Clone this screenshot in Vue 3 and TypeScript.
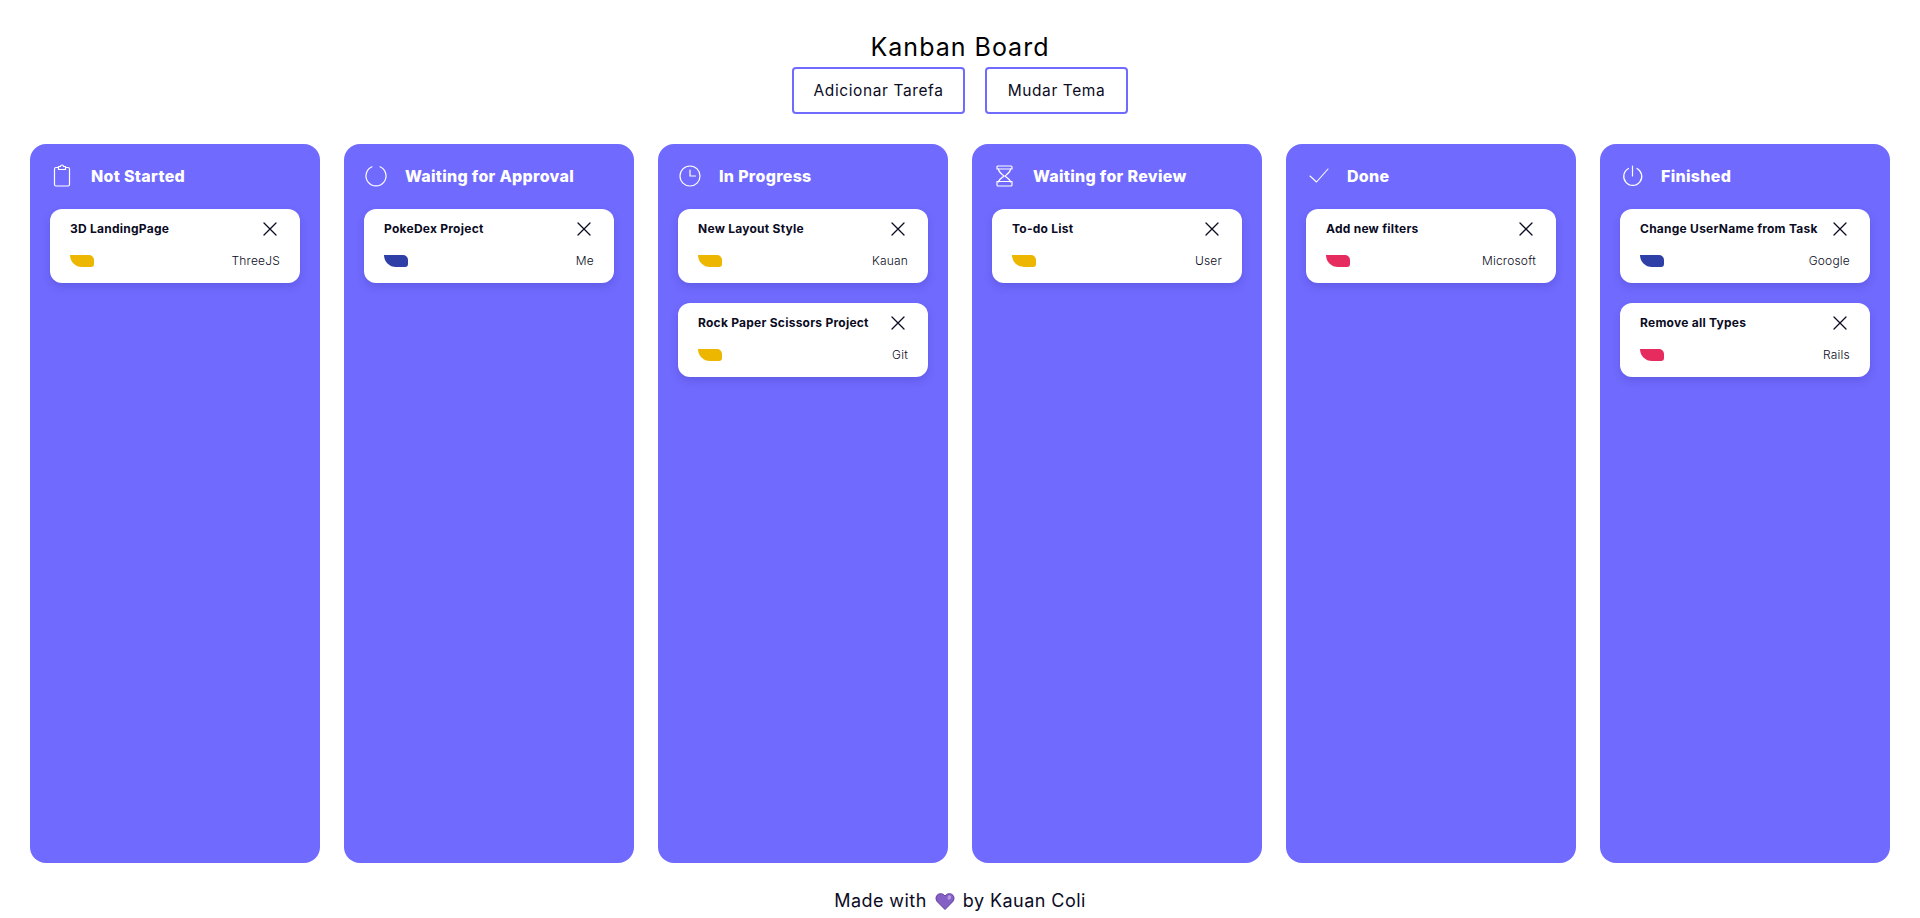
<template>
  <div class="page">
    <header class="top">
      <h1>Kanban Board</h1>
      <div class="actions">
        <button class="btn btn-add">Adicionar Tarefa</button>
        <button class="btn btn-theme">Mudar Tema</button>
      </div>
    </header>

    <main class="board">
      <section v-for="col in columns" :key="col.title" class="column">
        <div class="column-head">
          <svg class="col-icon" viewBox="0 0 24 24" fill="none" stroke="#fff" stroke-linecap="round" stroke-linejoin="round">
            <path v-for="d in col.icon" :key="d" :d="d" :stroke-width="col.stroke" />
          </svg>
          <h2>{{ col.title }}</h2>
        </div>
        <article v-for="task in col.tasks" :key="task.name" class="card">
          <div class="card-top">
            <span class="task-name">{{ task.name }}</span>
            <svg class="close" viewBox="0 0 24 24" fill="none" stroke="#0b0b24" stroke-width="1.3" stroke-linecap="round">
              <path d="M6 6 18 18M18 6 6 18" />
            </svg>
          </div>
          <div class="card-bottom">
            <span class="tag" :class="task.priority"></span>
            <span class="owner">{{ task.owner }}</span>
          </div>
        </article>
      </section>
    </main>

    <footer class="foot">
      <span>Made with</span>
      <svg class="heart" viewBox="0 0 20 20">
        <path d="M10 18.5 2.6 11C.4 8.7.6 5.3 2.8 3.6 5 1.9 8.2 2.5 10 5c1.8-2.5 5-3.1 7.2-1.4 2.2 1.7 2.4 5.1.2 7.4z" fill="#8560c4" stroke="#5f3aa3" stroke-width="1" />
        <ellipse cx="14.3" cy="6.5" rx="1.7" ry="2.2" fill="#b89be6" transform="rotate(25 14.3 6.5)" />
      </svg>
      <span>by Kauan Coli</span>
    </footer>
  </div>
</template>

<script setup lang="ts">
type Priority = 'low' | 'mid' | 'high'

interface Task {
  name: string
  owner: string
  priority: Priority
}

interface Column {
  title: string
  icon: string[]
  stroke: number
  tasks: Task[]
}

const columns: Column[] = [
  {
    title: 'Not Started',
    icon: ['M8.5 3.5H6A1.5 1.5 0 0 0 4.5 5v15.5A1.5 1.5 0 0 0 6 22h12a1.5 1.5 0 0 0 1.5-1.5V5A1.5 1.5 0 0 0 18 3.5h-2.5', 'M8.5 2.5h2a1.5 1.5 0 0 1 3 0h2v3h-7z'],
    stroke: 1.2,
    tasks: [{ name: '3D LandingPage', owner: 'ThreeJS', priority: 'mid' }],
  },
  {
    title: 'Waiting for Approval',
    icon: ['M8 2.8a10 10 0 1 0 8 0'],
    stroke: 1.2,
    tasks: [{ name: 'PokeDex Project', owner: 'Me', priority: 'low' }],
  },
  {
    title: 'In Progress',
    icon: ['M22 12a10 10 0 1 1-20 0 10 10 0 0 1 20 0z', 'M12 6v6h5.5'],
    stroke: 1.2,
    tasks: [
      { name: 'New Layout Style', owner: 'Kauan', priority: 'mid' },
      { name: 'Rock Paper Scissors Project', owner: 'Git', priority: 'mid' },
    ],
  },
  {
    title: 'Waiting for Review',
    icon: ['M6 2h13a1 1 0 0 1 1 1v2H5V3a1 1 0 0 1 1-1z', 'M6.5 5c0 3.5 3.5 5 5.5 7-2 2-5.5 3.5-5.5 6', 'M18.5 5c0 3.5-3.5 5-5.5 7 2 2 5.5 3.5 5.5 6', 'M5 17.5h15V21a1 1 0 0 1-1 1H6a1 1 0 0 1-1-1z'],
    stroke: 1.2,
    tasks: [{ name: 'To-do List', owner: 'User', priority: 'mid' }],
  },
  {
    title: 'Done',
    icon: ['M4 12l6.5 6L22 5'],
    stroke: 1.1,
    tasks: [{ name: 'Add new filters', owner: 'Microsoft', priority: 'high' }],
  },
  {
    title: 'Finished',
    icon: ['M8.5 4.5a9 9 0 1 0 8.5 0', 'M12.5 2v10'],
    stroke: 1.2,
    tasks: [
      { name: 'Change UserName from Task', owner: 'Google', priority: 'low' },
      { name: 'Remove all Types', owner: 'Rails', priority: 'high' },
    ],
  },
]
</script>

<style>
body {
  background: #fff;
}
</style>

<style scoped>
.page {
  height: 100vh;
  display: flex;
  flex-direction: column;
  font-family: Inter, "Noto Sans", sans-serif;
  color: #0b0b24;
  overflow: hidden;
}

.top {
  display: flex;
  flex-direction: column;
  align-items: center;
  padding: 29px 0 30px;
}

h1 {
  margin: 0;
  font-size: 25px;
  line-height: 36px;
  font-weight: 400;
  letter-spacing: 1px;
  color: #000;
}

.actions {
  display: flex;
  gap: 20px;
  margin-top: 2px;
}

.btn {
  height: 47px;
  box-sizing: border-box;
  background: #fff;
  border: 2px solid #716aff;
  border-radius: 4px;
  font-family: inherit;
  font-size: 15.5px;
  font-weight: 400;
  color: #0b0b24;
  letter-spacing: 0.6px;
  padding: 0;
}

.btn-add {
  width: 173px;
}

.btn-theme {
  width: 143px;
}

.board {
  flex: 1;
  min-height: 0;
  display: flex;
  justify-content: center;
  gap: 24px;
  padding: 0 30px;
}

.column {
  flex: 1;
  box-sizing: border-box;
  background: #716aff;
  border-radius: 16px;
  padding: 0 20px;
  display: flex;
  flex-direction: column;
  gap: 20px;
}

.column-head {
  display: flex;
  align-items: center;
  gap: 17px;
  height: 65px;
  margin-bottom: -20px;
  color: #fff;
}

.col-icon {
  width: 24px;
  height: 24px;
  flex: none;
  margin-top: -1px;
}

h2 {
  margin: -1px 0 0;
  font-size: 16px;
  line-height: 24px;
  font-weight: 800;
  letter-spacing: 0.3px;
}

.card {
  background: #fff;
  border-radius: 12px;
  height: 74px;
  box-sizing: border-box;
  padding: 8px 20px 13px;
  display: flex;
  flex-direction: column;
  justify-content: space-between;
  box-shadow: 0 4px 8px rgba(30, 25, 120, 0.18);
}

.card-top {
  display: flex;
  align-items: center;
  justify-content: space-between;
  height: 24px;
}

.task-name {
  font-size: 12px;
  font-weight: 700;
  line-height: 24px;
  white-space: nowrap;
  letter-spacing: 0.25px;
}

.close {
  width: 24px;
  height: 24px;
  flex: none;
  margin-right: -2px;
}

.card-bottom {
  display: flex;
  align-items: center;
  justify-content: space-between;
  height: 18px;
}

.tag {
  width: 24px;
  height: 12px;
  border-radius: 0 5px 3px 12px;
}

.tag.low {
  background: #2f3fa8;
}

.tag.mid {
  background: #edb600;
}

.tag.high {
  background: #e62c5f;
}

.owner {
  font-size: 12px;
  font-weight: 300;
  line-height: 18px;
  letter-spacing: 0.2px;
}

.foot {
  height: 55px;
  box-sizing: border-box;
  padding-top: 20px;
  display: flex;
  align-items: flex-start;
  justify-content: center;
  gap: 8px;
  font-size: 18px;
  line-height: 36px;
  letter-spacing: 0.45px;
}

.heart {
  width: 20px;
  height: 20px;
  margin-top: 8px;
  flex: none;
}
</style>
